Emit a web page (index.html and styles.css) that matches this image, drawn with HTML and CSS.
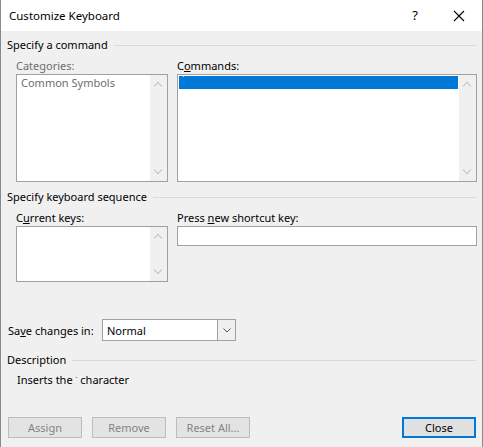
FILE: index.html
```html
<!DOCTYPE html>
<html>
<head>
<meta charset="utf-8">
<link rel="stylesheet" href="styles.css">
</head>
<body>
<div class="dialog">
  <div class="titlebar">
    <span class="title">Customize Keyboard</span>
    <span class="help">?</span>
    <span class="close">
      <svg width="12" height="12" viewBox="0 0 12 12"><path d="M1 1 L11 11 M11 1 L1 11" stroke="#000" stroke-width="1.1" fill="none"/></svg>
    </span>
  </div>
  <div class="content">
    <div class="group-head g1"><span>Specify a command</span><i class="rule"></i></div>
    <div class="grid labels1">
      <div class="label disabled">Categories:</div>
      <div class="label">C<u>o</u>mmands:</div>
    </div>
    <div class="grid">
      <div class="listbox tall">
        <div class="items"><div class="item disabled">Common Symbols</div></div>
        <div class="scroll"><span class="up"></span><span class="down"></span></div>
      </div>
      <div class="listbox tall">
        <div class="items"><div class="item selected">`</div></div>
        <div class="scroll"><span class="up"></span><span class="down"></span></div>
      </div>
    </div>

    <div class="group-head g2"><span>Specify keyboard sequence</span><i class="rule"></i></div>
    <div class="grid labels2">
      <div class="label">C<u>u</u>rrent keys:</div>
      <div class="label">Press <u>n</u>ew shortcut key:</div>
    </div>
    <div class="grid">
      <div class="listbox short">
        <div class="items"></div>
        <div class="scroll"><span class="up"></span><span class="down"></span></div>
      </div>
      <div class="textbox"></div>
    </div>

    <div class="save-row">
      <span class="label">Sa<u>v</u>e changes in:</span>
      <div class="select">
        <span class="select-text">Normal</span>
        <span class="select-btn"><svg width="8" height="5" viewBox="0 0 8 5"><path d="M0.5 0.5 L4 4 L7.5 0.5" stroke="#555" stroke-width="1" fill="none"/></svg></span>
      </div>
    </div>

    <div class="group-head g3"><span>Description</span><i class="rule"></i></div>
    <div class="desc">Inserts the <span class="tick">`</span> character</div>

    <div class="buttons">
      <button class="btn dis">Assign</button>
      <button class="btn dis">Remove</button>
      <button class="btn dis">Reset All...</button>
      <span class="spacer"></span>
      <button class="btn default">Close</button>
    </div>
  </div>
</div>
</body>
</html>
```
FILE: styles.css
```css
* { box-sizing: border-box; }
html, body { margin: 0; padding: 0; }
body {
  width: 483px;
  height: 447px;
  background: #f0f0f0;
  font-family: "Noto Sans", "Open Sans", sans-serif;
  font-size: 11px;
  color: #000;
  overflow: hidden;
}
.dialog {
  width: 483px;
  height: 447px;
  border-left: 1px solid #8a8a8a;
  border-right: 1px solid #8a8a8a;
  background: #f0f0f0;
}
.titlebar {
  height: 31px;
  background: #fff;
  display: flex;
  align-items: center;
  padding-left: 8px;
}
.title { font-size: 11.5px; flex: 1; padding-bottom: 1px; }
.help { width: 20px; text-align: center; font-size: 13px; margin-right: 28px; padding-bottom: 2px; }
.close { width: 14px; height: 12px; margin-right: 15px; display: flex; }

.content { padding: 0 6px 0 6px; }

.group-head {
  display: flex;
  align-items: center;
  height: 16px;
  line-height: 16px;
}
.group-head .rule {
  flex: 1;
  height: 1px;
  background: #dadada;
  margin-left: 6px;
  margin-top: 1px;
}
.g1 { margin-top: 6px; }
.g2 { margin-top: 7px; }
.g3 { margin-top: 11px; }

.grid {
  display: grid;
  grid-template-columns: 152px 300px;
  column-gap: 9px;
  margin-left: 9px;
}
.labels1 { margin-top: 5px; height: 16px; line-height: 16px; }
.labels2 { margin-top: 5px; height: 16px; line-height: 16px; }
.label { white-space: nowrap; }
.disabled { color: #6d6d6d; }

.listbox {
  border: 1px solid #a0a0a0;
  background: #fff;
  display: flex;
}
.listbox.tall { height: 108px; }
.listbox.short { height: 56px; }
.items { flex: 1; padding: 1px 1px; }
.item { height: 13px; line-height: 13px; padding-left: 3px; }
.item.disabled { line-height: 14px; padding-top: 0; }
.item.selected { background: #0078d7; color: #fff; font-size: 8px; line-height: 8px; }
.scroll {
  width: 17px;
  background: #f0f0f0;
  position: relative;
}
.scroll .up, .scroll .down {
  position: absolute;
  left: 5px;
  width: 6px;
  height: 6px;
  border-left: 1.5px solid #c2c2c2;
  border-top: 1.5px solid #c2c2c2;
}
.scroll .up { top: 8px; transform: rotate(45deg); }
.scroll .down { bottom: 8px; transform: rotate(225deg); }

.textbox {
  height: 20px;
  border: 1px solid #a0a0a0;
  background: #fff;
}

.save-row {
  display: flex;
  align-items: center;
  margin-top: 37px;
  height: 22px;
}
.save-row .label { width: 95px; padding-left: 1px; }
.select {
  width: 134px;
  height: 22px;
  border: 1px solid #a0a0a0;
  background: #fff;
  display: flex;
  align-items: center;
}
.select-text { flex: 1; padding-left: 4px; }
.select-btn {
  width: 18px;
  height: 20px;
  border-left: 1px solid #a0a0a0;
  background: #f0f0f0;
  display: flex;
  align-items: center;
  justify-content: center;
}

.desc { margin-top: 4px; padding-left: 10px; height: 16px; line-height: 16px; }
.tick { font-size: 7px; vertical-align: top; }

.buttons {
  display: flex;
  margin-top: 29px;
  padding-left: 1px;
  gap: 10px;
}
.spacer { flex: 1; }
.btn {
  width: 74px;
  height: 21px;
  font-family: inherit;
  font-size: 11px;
  padding: 0;
  background: #e1e1e1;
  border: 1px solid #adadad;
  color: #000;
}
.btn.dis { color: #838383; border-color: #bcbcbc; background: #e3e3e3; }
.btn.default { border: 2px solid #0078d7; margin-right: 0; }
```
